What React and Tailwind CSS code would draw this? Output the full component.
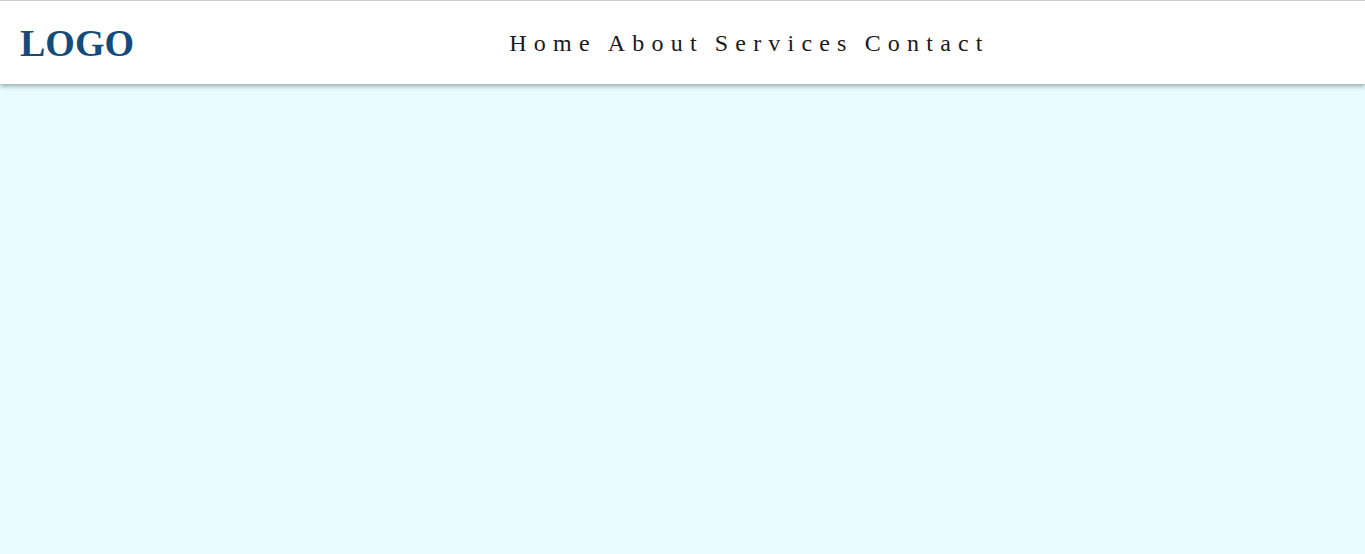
import React from 'react';

export default function App() {
  const links = ['Home', 'About', 'Services', 'Contact'];

  return (
    <div className="min-h-[554px] bg-[#e6fcff] font-['Liberation_Serif',serif]">
      {/* Header */}
      <header className="flex items-center h-[84px] px-5 bg-white border-t border-[#cccccc] shadow-[0_2px_5px_rgba(0,0,0,0.35)]">
        <div className="text-[38px] font-bold text-[#134b7d] leading-none">LOGO</div>
        <nav className="flex-1 flex justify-center gap-[11px] pl-[20px] text-[24px] tracking-[0.3em] text-[#1a1a1a]">
          {links.map(link => (
            <a key={link} href="#">
              {link}
            </a>
          ))}
        </nav>
      </header>
    </div>
  );
}
